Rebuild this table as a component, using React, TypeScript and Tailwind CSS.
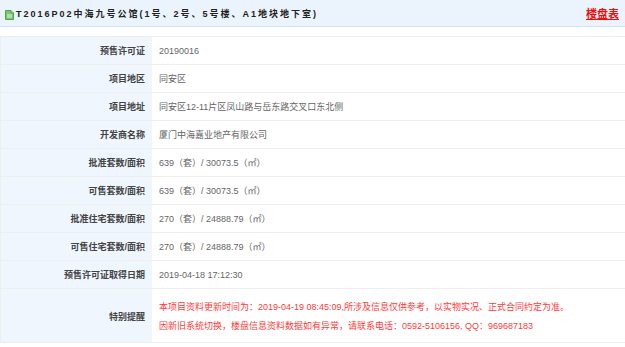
import React from 'react';

const rows: [string, string][] = [
  ['预售许可证', '20190016'],
  ['项目地区', '同安区'],
  ['项目地址', '同安区12-11片区凤山路与岳东路交叉口东北侧'],
  ['开发商名称', '厦门中海嘉业地产有限公司'],
  ['批准套数/面积', '639（套）/ 30073.5（㎡）'],
  ['可售套数/面积', '639（套）/ 30073.5（㎡）'],
  ['批准住宅套数/面积', '270（套）/ 24888.79（㎡）'],
  ['可售住宅套数/面积', '270（套）/ 24888.79（㎡）'],
  ['预售许可证取得日期', '2019-04-18 17:12:30'],
];

const DocIcon = () => (
  <svg width="9" height="10" viewBox="0 0 9 10" className="shrink-0">
    <path d="M0.5 0.5 H6 L8.5 3 V9.5 H0.5 Z" fill="#7cc576" stroke="#4fa648" strokeWidth="1" />
    <path d="M6 0.5 V3 H8.5" fill="#c9ecc4" stroke="#4fa648" strokeWidth="1" />
    <path d="M2 5 H7 M2 7 H7" stroke="#ffffff" strokeWidth="0.8" />
  </svg>
);

export default function App() {
  return (
    <div
      className="w-[625px] h-[347px] bg-white overflow-hidden"
      style={{ fontFamily: '"Liberation Sans", "Noto Sans CJK SC", sans-serif' }}
    >
      {/* Header */}
      <div className="h-[27px] flex items-center justify-between bg-[#ebf4fd] border-b border-[#cfe2f6] pl-[5px] pr-[6px] pt-[3px]">
        <div className="flex items-center gap-[2px]">
          <DocIcon />
          <span className="text-[9px] font-bold text-[#222] tracking-[2px]">
            T2016P02中海九号公馆(1号、2号、5号楼、A1地块地下室)
          </span>
        </div>
        <a className="text-[11px] font-bold text-[#f20d0d] underline">楼盘表</a>
      </div>

      {/* Table */}
      <div className="mt-[9px] border-t border-l border-[#eeeeee]">
        {rows.map(([k, v]) => (
          <div key={k} className="grid grid-cols-[151px_1fr] h-[28px] border-b border-[#eeeeee]">
            <div className="bg-[#eff6fe] flex items-center justify-end pr-[7px] pt-[3px] text-[9px] font-bold text-[#444]">
              {k}
            </div>
            <div className="flex items-center pl-[7px] pt-[3px] text-[9px] text-[#666]">{v}</div>
          </div>
        ))}
        <div className="grid grid-cols-[151px_1fr] h-[54px] border-b border-[#eeeeee]">
          <div className="bg-[#eff6fe] flex items-center justify-end pr-[7px] pt-[4px] text-[9px] font-bold text-[#444]">
            特别提醒
          </div>
          <div className="flex flex-col justify-center gap-[6px] pl-[7px] pt-[3px] text-[9px] text-[#ff3b3b] leading-[13px]">
            <div>本项目资料更新时间为：2019-04-19 08:45:09,所涉及信息仅供参考，以实物实况、正式合同约定为准。</div>
            <div>因新旧系统切换，楼盘信息资料数据如有异常，请联系电话：0592-5106156, QQ：969687183</div>
          </div>
        </div>
      </div>
    </div>
  );
}
